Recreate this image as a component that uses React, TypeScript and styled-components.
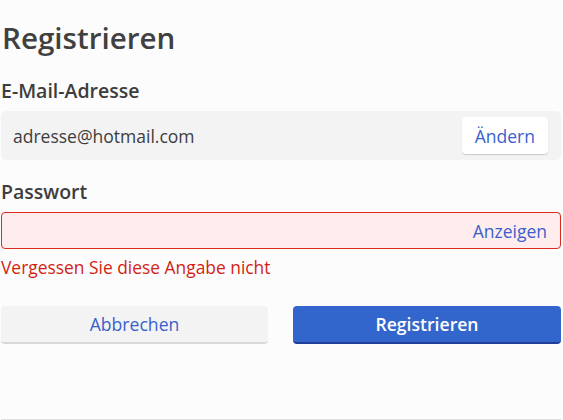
import styled, { createGlobalStyle } from 'styled-components'

const GlobalStyle = createGlobalStyle`
  html, body {
    margin: 0;
    padding: 0;
    background: #fcfcfc;
  }
  body {
    font-family: "Open Sans", "Liberation Sans", sans-serif;
    color: #3d3d3d;
  }
`

const App = () => {
  return (
    <Page>
      <GlobalStyle />
      <Title>Registrieren</Title>

      <Label>E-Mail-Adresse</Label>
      <EmailBox>
        <EmailText>adresse@hotmail.com</EmailText>
        <ChangeButton type='button'>Ändern</ChangeButton>
      </EmailBox>

      <Label $spaced>Passwort</Label>
      <PasswordField $invalid>
        <PasswordInput type='password' />
        <ShowButton type='button'>Anzeigen</ShowButton>
      </PasswordField>
      <ErrorText>Vergessen Sie diese Angabe nicht</ErrorText>

      <Actions>
        <SecondaryButton type='button'>Abbrechen</SecondaryButton>
        <PrimaryButton type='button'>Registrieren</PrimaryButton>
      </Actions>
      <Footer />
    </Page>
  )
}

export default App

const Page = styled.div`
  width: 560px;
  height: 420px;
  margin-left: 1px;
  display: flex;
  flex-direction: column;
  box-sizing: border-box;
`

const Title = styled.h1`
  margin: 19px 0 0 1px;
  font-size: 29.6px;
  line-height: 38px;
  font-weight: 600;
  color: #404040;
`

const Label = styled.div<{ $spaced?: boolean }>`
  margin: ${({ $spaced }) => ($spaced ? '20px' : '22px')} 0 8px 0;
  font-size: 19.5px;
  line-height: 24px;
  font-weight: 600;
  color: #3d3d3d;
`

const EmailBox = styled.div`
  height: 49px;
  display: flex;
  align-items: center;
  justify-content: space-between;
  padding: 0 13px 0 12px;
  background: #f3f3f3;
  border-radius: 5px;
`

const EmailText = styled.span`
  font-size: 17.5px;
  color: #3d3d3d;
`

const ChangeButton = styled.button`
  height: 37px;
  padding: 0 13px;
  border: none;
  border-radius: 4px;
  background: #ffffff;
  box-shadow: 0 1px 1px rgba(0, 0, 0, 0.18);
  font-family: inherit;
  font-size: 17.5px;
  color: #3a5fcd;
  cursor: pointer;
`

const PasswordField = styled.div<{ $invalid?: boolean }>`
  height: 37px;
  display: flex;
  align-items: center;
  box-sizing: border-box;
  padding: 0 13px 0 12px;
  border: 1px solid ${({ $invalid }) => ($invalid ? '#dc2a1e' : '#cccccc')};
  border-radius: 4px;
  background: ${({ $invalid }) => ($invalid ? '#ffeded' : '#ffffff')};
`

const PasswordInput = styled.input`
  flex: 1;
  border: none;
  outline: none;
  background: transparent;
  font-family: inherit;
  font-size: 17.5px;
`

const ShowButton = styled.button`
  border: none;
  padding: 0;
  background: none;
  font-family: inherit;
  font-size: 17.5px;
  color: #3a5fcd;
  cursor: pointer;
`

const ErrorText = styled.div`
  margin-top: 7px;
  font-size: 17.4px;
  line-height: 23px;
  color: #d21f14;
`

const Actions = styled.div`
  margin-top: 27px;
  display: grid;
  grid-template-columns: 267px 268px;
  column-gap: 25px;
`

const BaseButton = styled.button`
  height: 38px;
  border: none;
  border-radius: 4px;
  font-family: inherit;
  font-size: 17.6px;
  cursor: pointer;
`

const SecondaryButton = styled(BaseButton)`
  background: #f3f3f3;
  border-bottom: 2px solid #d8d8d8;
  color: #3a5fcd;
`

const PrimaryButton = styled(BaseButton)`
  background: #3366cc;
  border-bottom: 2px solid #1f3f99;
  color: #ffffff;
  font-weight: 600;
`

const Footer = styled.div`
  margin-top: auto;
  height: 1px;
  background: #dddddd;
`
